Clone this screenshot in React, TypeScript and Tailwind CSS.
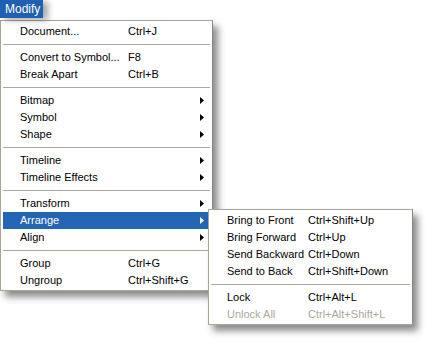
import React from "react";

type Item =
  | { sep: true }
  | { label: string; shortcut?: string; arrow?: boolean; active?: boolean; disabled?: boolean };

const mainItems: Item[] = [
  { label: "Document...", shortcut: "Ctrl+J" },
  { sep: true },
  { label: "Convert to Symbol...", shortcut: "F8" },
  { label: "Break Apart", shortcut: "Ctrl+B" },
  { sep: true },
  { label: "Bitmap", arrow: true },
  { label: "Symbol", arrow: true },
  { label: "Shape", arrow: true },
  { sep: true },
  { label: "Timeline", arrow: true },
  { label: "Timeline Effects", arrow: true },
  { sep: true },
  { label: "Transform", arrow: true },
  { label: "Arrange", arrow: true, active: true },
  { label: "Align", arrow: true },
  { sep: true },
  { label: "Group", shortcut: "Ctrl+G" },
  { label: "Ungroup", shortcut: "Ctrl+Shift+G" },
];

const subItems: Item[] = [
  { label: "Bring to Front", shortcut: "Ctrl+Shift+Up" },
  { label: "Bring Forward", shortcut: "Ctrl+Up" },
  { label: "Send Backward", shortcut: "Ctrl+Down" },
  { label: "Send to Back", shortcut: "Ctrl+Shift+Down" },
  { sep: true },
  { label: "Lock", shortcut: "Ctrl+Alt+L" },
  { label: "Unlock All", shortcut: "Ctrl+Alt+Shift+L", disabled: true },
];

function Arrow({ white }: { white?: boolean }) {
  return (
    <svg width="4" height="7" viewBox="0 0 4 7" className="block">
      <path d="M0 0 L4 3.5 L0 7 Z" fill={white ? "#ffffff" : "#000000"} />
    </svg>
  );
}

function MainMenu() {
  return (
    <div className="flex flex-col w-[213px] h-[271px] bg-white border border-[#a8a595] border-r-[#8a887c] px-[2px] pt-[2px] shadow-[5px_6px_7px_rgba(0,0,0,0.45)]">
      {mainItems.map((it, i) =>
        "sep" in it ? (
          <div key={i} className="h-[9px] flex items-center">
            <div className="h-px w-full bg-[#aca899]" />
          </div>
        ) : (
          <div
            key={i}
            className={`h-[17px] flex items-center pl-[17px] ${it.active ? "bg-[#2465b5] text-white" : "text-black"}`}
          >
            <span className="w-[108px] shrink-0 whitespace-nowrap">{it.label}</span>
            <span className="w-[72px] shrink-0 whitespace-nowrap">{it.shortcut ?? ""}</span>
            {it.arrow ? <Arrow white={it.active} /> : null}
          </div>
        )
      )}
    </div>
  );
}

function SubMenu() {
  return (
    <div className="absolute left-[208px] top-[209px] flex flex-col w-[205px] h-[116px] bg-white border border-[#a8a595] border-r-[#8a887c] px-[2px] pt-[2px] shadow-[5px_6px_7px_rgba(0,0,0,0.45)]">
      {subItems.map((it, i) =>
        "sep" in it ? (
          <div key={i} className="h-[9px] flex items-center">
            <div className="h-px w-full bg-[#aca899]" />
          </div>
        ) : (
          <div key={i} className={`h-[17px] flex items-center pl-[16px] ${it.disabled ? "text-[#aca899]" : "text-black"}`}>
            <span className="w-[81px] shrink-0 whitespace-nowrap">{it.label}</span>
            <span className="whitespace-nowrap">{it.shortcut}</span>
          </div>
        )
      )}
    </div>
  );
}

export default function App() {
  return (
    <div
      className="relative w-[426px] h-[344px] bg-white overflow-hidden text-[11px] leading-none"
      style={{ fontFamily: '"Liberation Sans", Arial, sans-serif' }}
    >
      <div className="flex">
        <div className="h-[18px] w-[43px] bg-[#1f60b0] text-white text-[12px] flex items-center pl-[5px] shadow-[5px_2px_6px_rgba(0,0,0,0.35)]">
          Modify
        </div>
      </div>
      <div className="h-[2px]" />
      <MainMenu />
      <SubMenu />
    </div>
  );
}
